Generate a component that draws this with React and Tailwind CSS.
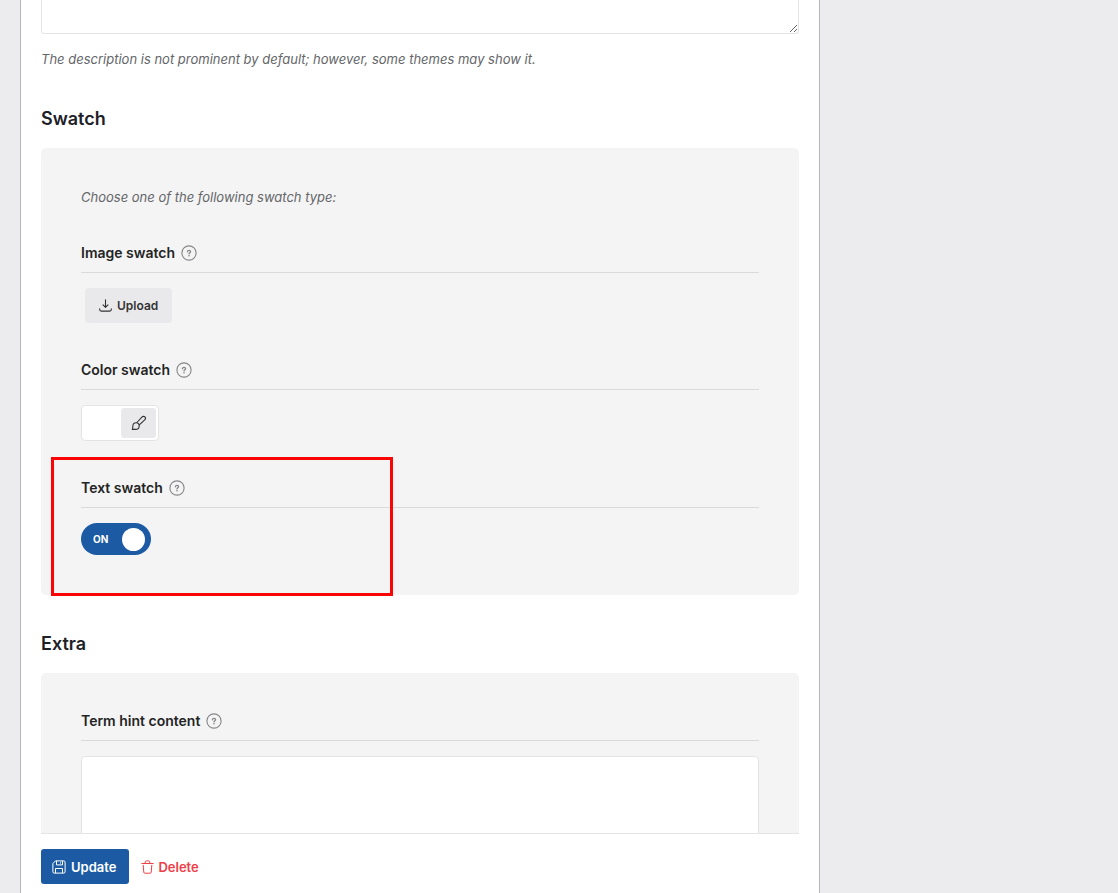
import React, { useState } from "react";

function HelpIcon() {
  return (
    <button type="button" aria-label="Help" className="flex size-4 items-center justify-center text-[#86868a]">
      <svg viewBox="0 0 16 16" className="size-4" fill="none" stroke="currentColor" aria-hidden="true">
        <circle cx="8" cy="8" r="7.1" strokeWidth="1.1" />
        <path d="M6.4 6.8c.1-.9.7-1.400 1.600-1.400s1.600.5 1.600 1.300c0 1-1.500 1.100-1.600 2.200" strokeWidth="1.3" strokeLinecap="round" />
        <circle cx="8" cy="10.700" r=".8" fill="currentColor" stroke="none" />
      </svg>
    </button>
  );
}

function UploadIcon() {
  return (
    <svg viewBox="0 0 13 13" className="size-[13px]" fill="none" stroke="currentColor" strokeWidth="1.100" strokeLinecap="round" strokeLinejoin="round" aria-hidden="true">
      <path d="M6.500 .8v7.400M4 5.900l2.500 2.500L9 5.900M.7 9.700v.9c0 .9.6 1.500 1.500 1.500h8.600c.9 0 1.500-.6 1.500-1.500v-.9" />
    </svg>
  );
}

function BrushIcon() {
  return (
    <svg viewBox="0 0 16 16" className="size-4" fill="none" stroke="currentColor" strokeWidth="1.100" strokeLinecap="round" strokeLinejoin="round" aria-hidden="true">
      <path d="M5.900 7.500 10.900 2.100c.9-.9 2.200-1 3-.2.8.8.7 2.100-.2 3L8.300 9.900" />
      <path d="M1.300 14.400c.6-.7.5-1.700.5-2.900 0-2.200 1.400-3.700 3.300-3.700 1.800 0 3.100 1.300 3.100 3.100 0 2.100-1.600 3.500-3.800 3.500z" />
    </svg>
  );
}

function SaveIcon() {
  return (
    <svg viewBox="0 0 14 14" className="size-[14px]" fill="none" stroke="currentColor" strokeWidth="1" strokeLinejoin="round" aria-hidden="true">
      <path d="M3.500 .9h8.400c.7 0 1.200.5 1.200 1.200v9.800c0 .7-.5 1.200-1.200 1.200H2.100c-.7 0-1.200-.5-1.200-1.200V3.500z" />
      <path d="M4.500 .9v4h6v-4M8.500 2.300v1.200M3.500 13.100V8.500h7v4.600" />
    </svg>
  );
}

function TrashIcon() {
  return (
    <svg viewBox="0 0 13 14" className="h-[14px] w-[13px]" fill="none" stroke="currentColor" strokeWidth="1" strokeLinecap="round" strokeLinejoin="round" aria-hidden="true">
      <path d="M.8 3.500h11.400M4 3.400l.3-1.600c.1-.6.5-.9 1.100-.9h2.200c.6 0 1 .3 1.100.9L9 3.400M2.200 5.300l.6 7c.1.600.4.900 1 .9h5.400c.6 0 .9-.3 1-.9l.6-7" />
    </svg>
  );
}

function Field({ label, htmlFor, className = "", children }) {
  return (
    <div className={className}>
      <div className="mb-[15px] flex h-[30px] gap-[6px] border-b border-[#dadada] pb-[9px]">
        <label htmlFor={htmlFor} className="text-sm leading-5 font-semibold text-[#242424]">
          {label}
        </label>
        <div className="flex h-5 items-center">
          <HelpIcon />
        </div>
      </div>
      {children}
    </div>
  );
}

export default function App() {
  const [on, setOn] = useState(true);

  return (
    <div className="min-h-screen bg-[#ececee] pl-5 font-['Inter','Liberation_Sans',sans-serif] text-[13px] leading-5">
      <form
        onSubmit={(e) => e.preventDefault()}
        className="flex h-screen w-full max-w-[800px] flex-col border-x border-[#b4b6b9] bg-white px-5"
      >
        <div className="min-h-0 flex-1 overflow-hidden">
          <textarea
            aria-label="Description"
            className="block h-[34px] w-full resize-y rounded-b-[3px] border border-t-0 border-[#e4e4e4] bg-white outline-none"
          />
          <p className="mt-[15px] text-[#646669] italic">
            The description is not prominent by default; however, some themes may show it.
          </p>

          <h2 className="mt-9 mb-[15px] text-lg leading-7 font-semibold text-[#1d2127]">Swatch</h2>
          <section className="rounded-[5px] bg-[#f4f4f4] px-10 pt-[39px] pb-10">
            <p className="mb-9 text-[#646669] italic">Choose one of the following swatch type:</p>

            <Field label="Image swatch" htmlFor="image-upload" className="mb-[37px]">
              <button
                id="image-upload"
                type="button"
                className="ml-1 flex h-[35px] items-center gap-[5px] rounded-[4px] bg-[#e9e9eb] px-[14px] text-xs font-semibold text-[#333]"
              >
                <UploadIcon />
                Upload
              </button>
            </Field>

            <Field label="Color swatch" htmlFor="color-picker" className="mb-[37px]">
              <div className="flex h-9 w-[78px] justify-end rounded-[4px] border border-[#e4e4e4] bg-white p-[2px]">
                <button
                  id="color-picker"
                  type="button"
                  aria-label="Pick a color"
                  className="flex w-[35px] items-center justify-center rounded-[3px] bg-[#e9e9eb] text-[#333]"
                >
                  <BrushIcon />
                </button>
              </div>
            </Field>

            <Field label="Text swatch" htmlFor="text-swatch" className="relative">
              <label className="flex h-8 w-[70px] cursor-pointer items-center justify-between rounded-full bg-[#1c5ba3] pr-[6px] pl-3 text-[10px] font-bold text-white">
                <input
                  id="text-swatch"
                  type="checkbox"
                  className="sr-only"
                  checked={on}
                  onChange={(e) => setOn(e.target.checked)}
                />
                {on ? "ON" : "OFF"}
                <span className="size-[23px] rounded-full bg-white" />
              </label>
              <div className="pointer-events-none absolute -top-[21px] -left-[30px] h-[139px] w-[342px] border-3 border-[#fa0505]" />
            </Field>
          </section>

          <h2 className="mt-[35px] mb-[15px] text-lg leading-7 font-semibold text-[#1d2127]">Extra</h2>
          <section className="rounded-[5px] bg-[#f4f4f4] px-10 pt-[38px] pb-10">
            <Field label="Term hint content" htmlFor="term-hint">
              <textarea
                id="term-hint"
                className="block h-[120px] w-full resize-y rounded-[4px] border border-[#e4e4e4] bg-white p-2 outline-none"
              />
            </Field>
          </section>
        </div>

        <footer className="flex items-center gap-3 border-t border-[#e4e4e4] pt-[15px] pb-[9px] font-semibold">
          <button type="submit" className="flex h-[35px] items-center gap-[5px] rounded-[3px] bg-[#1c5ba3] pr-[13px] pl-[11px] text-white">
            <SaveIcon />
            Update
          </button>
          <button type="button" className="flex items-center gap-1 text-[#ee4048]">
            <TrashIcon />
            Delete
          </button>
        </footer>
      </form>
    </div>
  );
}
